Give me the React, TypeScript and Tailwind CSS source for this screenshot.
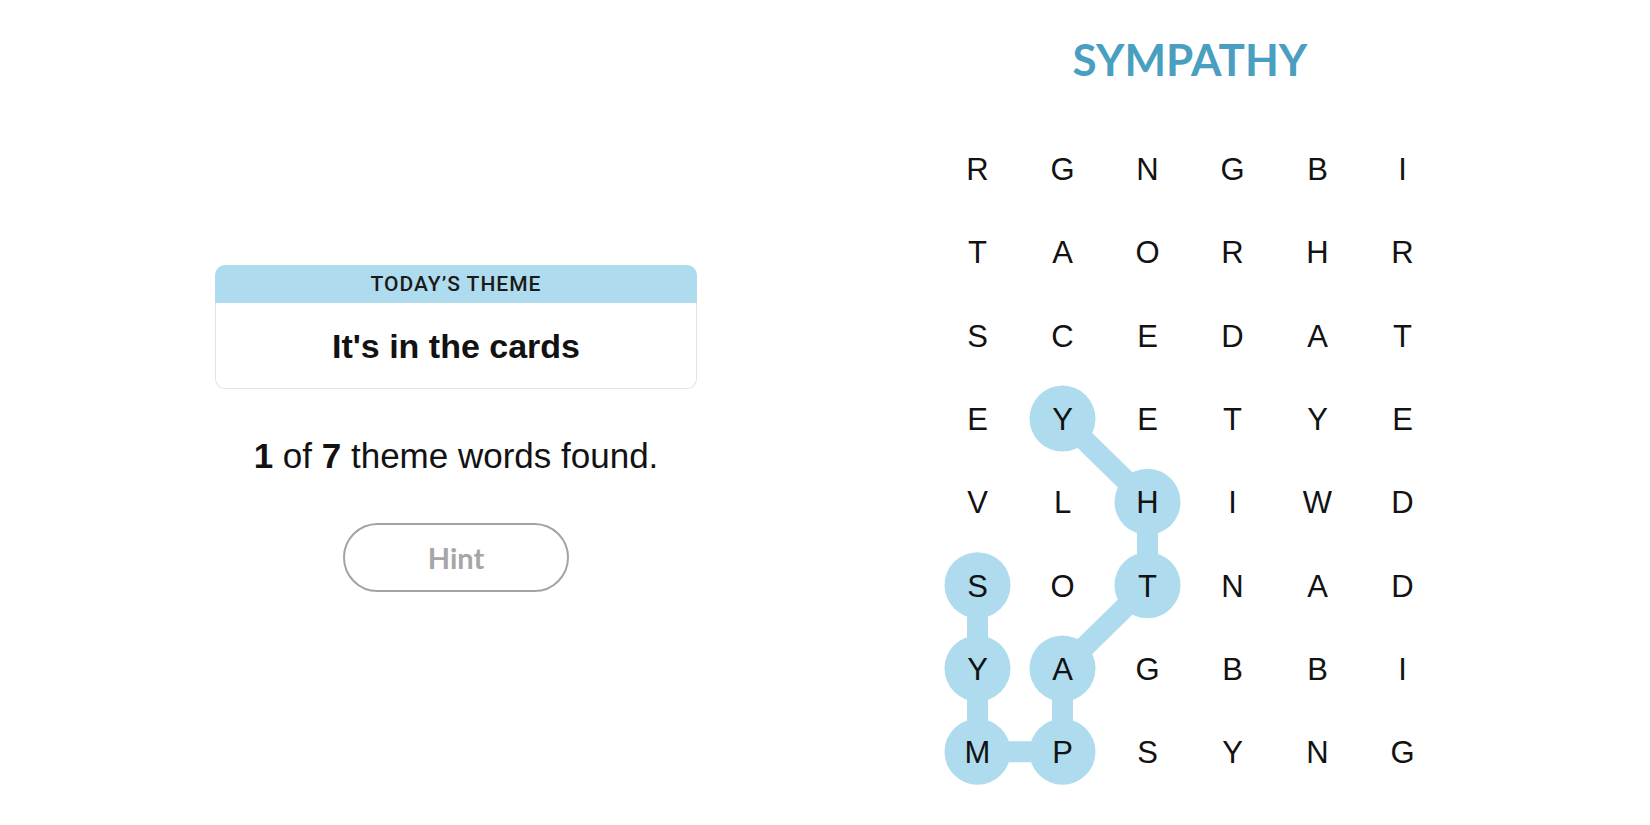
import React from 'react';

const grid = [
  ['R', 'G', 'N', 'G', 'B', 'I'],
  ['T', 'A', 'O', 'R', 'H', 'R'],
  ['S', 'C', 'E', 'D', 'A', 'T'],
  ['E', 'Y', 'E', 'T', 'Y', 'E'],
  ['V', 'L', 'H', 'I', 'W', 'D'],
  ['S', 'O', 'T', 'N', 'A', 'D'],
  ['Y', 'A', 'G', 'B', 'B', 'I'],
  ['M', 'P', 'S', 'Y', 'N', 'G'],
];

// found word path: [col, row]
const path: [number, number][] = [
  [0, 5],
  [0, 6],
  [0, 7],
  [1, 7],
  [1, 6],
  [2, 5],
  [2, 4],
  [1, 3],
];

const CW = 85;
const CH = 83.3;

function FoundPath() {
  const pts = path.map(([c, r]) => [c * CW + CW / 2, r * CH + CH / 2]);
  return (
    <svg className="absolute inset-0" width={CW * 6} height={CH * 8}>
      <polyline
        points={pts.map((p) => p.join(',')).join(' ')}
        fill="none"
        stroke="#aedcee"
        strokeWidth={21}
        strokeLinejoin="round"
      />
      {pts.map(([x, y], i) => (
        <circle key={i} cx={x} cy={y} r={33} fill="#aedcee" />
      ))}
    </svg>
  );
}

export default function App() {
  return (
    <div className="w-full h-[825px] bg-white flex">
      {/* 左侧：主题卡片 */}
      <div className="w-[912px] flex flex-col items-center">
        <div className="mt-[265px] w-[482px]">
          <div className="h-[38px] bg-[#aedcee] rounded-t-[10px] flex items-center justify-center">
            <span className="font-['Roboto',sans-serif] font-medium text-[21px] tracking-[1px] text-[#1a1a1a] leading-none">
              TODAY’S THEME
            </span>
          </div>
          <div className="h-[86px] border-x border-b border-[#e2e2e2] rounded-b-[10px] flex items-center justify-center">
            <span className="font-['Liberation_Sans',Arial,sans-serif] font-bold text-[34px] text-[#121212] leading-none">
              It's in the cards
            </span>
          </div>
        </div>

        <p className="mt-[49px] font-['Liberation_Sans',Arial,sans-serif] text-[35px] leading-none text-[#121212]">
          <b>1</b> of <b>7</b> theme words found.
        </p>

        <button className="mt-[50px] w-[226px] h-[69px] rounded-full border-2 border-[#a3a3a3] flex items-center justify-center">
          <span className="font-['Lato',sans-serif] font-bold text-[29px] text-[#a6a6a6] leading-none">Hint</span>
        </button>
      </div>

      {/* 右侧：字母网格 */}
      <div className="w-[556px] flex flex-col items-center">
        <h1 className="mt-[37px] font-['Lato',sans-serif] font-bold text-[44px] leading-[44px] text-[#4a9fc1]">
          SYMPATHY
        </h1>

        <div className="relative mt-[46px] w-[510px]">
          <FoundPath />
          <div className="relative grid grid-cols-6">
            {grid.flat().map((ch, i) => (
              <div key={i} className="h-[83.3px] flex items-center justify-center">
                <span className="mt-[2px] font-['Liberation_Sans',Arial,sans-serif] text-[31px] leading-none text-[#121212]">
                  {ch}
                </span>
              </div>
            ))}
          </div>
        </div>
      </div>
    </div>
  );
}
